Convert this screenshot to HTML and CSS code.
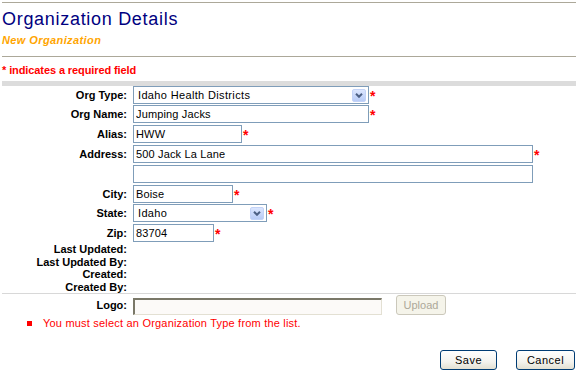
FILE: index.html
```html
<!DOCTYPE html>
<html>
<head>
<meta charset="utf-8">
<title>Organization Details</title>
<link rel="stylesheet" href="styles.css">
</head>
<body>
<div class="rule rule-top"></div>
<h1 class="title">Organization Details</h1>
<div class="subtitle">New Organization</div>
<div class="rule rule-mid"></div>
<div class="required-note">* indicates a required field</div>
<div class="bar"></div>

<div class="form">
  <div class="form-row tight">
    <label class="label">Org Type:</label>
    <div class="field select w-236">
      <span>Idaho Health Districts</span>
      <span class="drop"><svg width="8" height="5" viewBox="0 0 8 5"><polyline points="1,0.8 4,3.8 7,0.8" fill="none" stroke="#4d6185" stroke-width="2"/></svg></span>
    </div>
    <span class="req">*</span>
  </div>
  <div class="form-row">
    <label class="label">Org Name:</label>
    <input class="field w-236" type="text" value="Jumping Jacks">
    <span class="req">*</span>
  </div>
  <div class="form-row">
    <label class="label">Alias:</label>
    <input class="field w-109" type="text" value="HWW">
    <span class="req">*</span>
  </div>
  <div class="form-row">
    <label class="label">Address:</label>
    <input class="field w-400" type="text" value="500 Jack La Lane">
    <span class="req">*</span>
  </div>
  <div class="form-row">
    <span class="label"></span>
    <input class="field w-400" type="text" value="">
  </div>
  <div class="form-row tight">
    <label class="label">City:</label>
    <input class="field w-100" type="text" value="Boise">
    <span class="req">*</span>
  </div>
  <div class="form-row">
    <label class="label">State:</label>
    <div class="field select w-134">
      <span>Idaho</span>
      <span class="drop"><svg width="8" height="5" viewBox="0 0 8 5"><polyline points="1,0.8 4,3.8 7,0.8" fill="none" stroke="#4d6185" stroke-width="2"/></svg></span>
    </div>
    <span class="req">*</span>
  </div>
  <div class="form-row tight">
    <label class="label">Zip:</label>
    <input class="field w-81" type="text" value="83704">
    <span class="req">*</span>
  </div>
  <div class="info-row"><span class="label">Last Updated:</span></div>
  <div class="info-row"><span class="label">Last Updated By:</span></div>
  <div class="info-row"><span class="label">Created:</span></div>
  <div class="info-row"><span class="label">Created By:</span></div>
</div>

<div class="rule rule-light"></div>

<div class="logo-row">
  <label class="label">Logo:</label>
  <div class="file-input"></div>
  <button class="upload" disabled>Upload</button>
</div>

<div class="errors">
  <span class="bullet"></span>
  <span>You must select an Organization Type from the list.</span>
</div>

<div class="actions">
  <button class="btn btn-save">Save</button>
  <button class="btn btn-cancel">Cancel</button>
</div>
</body>
</html>
```

FILE: styles.css
```css
* { box-sizing: border-box; }

body {
  margin: 0;
  padding: 0 2px;
  font-family: "Liberation Sans", Arial, sans-serif;
  font-size: 11px;
  color: #000;
  background: #fff;
}

.rule { height: 1px; background: #aca899; }
.rule-top { margin-top: 2px; }
.rule-mid { margin-top: 9px; }
.rule-light { background: #d8d8d8; }

.title {
  margin: 6px 0 0 0;
  font-size: 18px;
  font-weight: normal;
  line-height: 21px;
  letter-spacing: 0.7px;
  color: #000080;
}

.subtitle {
  margin-top: 4px;
  font-weight: bold;
  font-style: italic;
  color: #ffa500;
  line-height: 13px;
  letter-spacing: 0.4px;
}

.required-note {
  margin-top: 7px;
  color: #f00;
  font-weight: bold;
  line-height: 13px;
  letter-spacing: -0.1px;
}

.bar { margin-top: 4px; height: 5px; background: #dcdcdc; }

.form-row {
  display: flex;
  align-items: center;
  height: 18px;
  margin-bottom: 2px;
}
.form-row.tight { margin-bottom: 1px; }

.label {
  flex: none;
  width: 125px;
  margin-right: 6px;
  text-align: right;
  font-weight: bold;
}

.field {
  flex: none;
  height: 18px;
  border: 1px solid #7f9db9;
  background: #fff;
  padding: 0 0 0 2px;
  font: inherit;
  letter-spacing: 0.15px;
  color: #000;
  outline: none;
}

.select {
  display: flex;
  align-items: center;
  justify-content: space-between;
  padding-left: 4px;
  letter-spacing: 0.35px;
}

.drop {
  width: 14px;
  height: 13px;
  margin-right: 2px;
  border: 1px solid #c3d3f7;
  border-radius: 2px;
  background: linear-gradient(#dbe6fe, #b8cbf6);
  display: flex;
  align-items: center;
  justify-content: center;
}

.w-236 { width: 236px; }
.w-109 { width: 109px; }
.w-400 { width: 400px; }
.w-100 { width: 100px; }
.w-134 { width: 134px; }
.w-81 { width: 81px; }

.req {
  align-self: flex-start;
  margin: 3px 0 0 1px;
  color: #f00;
  font-weight: bold;
  font-size: 14px;
  line-height: 14px;
}

.info-row {
  display: flex;
  height: 12.5px;
  line-height: 12.5px;
}

.logo-row {
  display: flex;
  align-items: center;
  height: 20px;
  margin-top: 1px;
}

.file-input {
  flex: none;
  width: 249px;
  height: 17px;
  margin-top: 2px;
  border-style: solid;
  border-width: 2px 1px 1px 2px;
  border-color: #7a7868 #e3e0d3 #e3e0d3 #7a7868;
  background: #fcfaf8;
}

.upload {
  flex: none;
  margin-left: 14px;
  width: 50px;
  height: 20px;
  border: 1px solid #cbc8bb;
  border-radius: 3px;
  background: #f5f4ea;
  color: #aca899;
  font: inherit;
  padding: 0;
}

.errors {
  display: flex;
  align-items: center;
  margin: 2px 0 0 25px;
  color: #f00;
  line-height: 13px;
  letter-spacing: 0.2px;
}

.bullet {
  flex: none;
  width: 5px;
  height: 5px;
  background: #f00;
  margin-right: 11px;
}

.actions {
  display: flex;
  justify-content: flex-end;
  gap: 19px;
  margin-top: 20px;
  padding-right: 1px;
}

.btn {
  height: 20px;
  padding: 0;
  border: 1px solid #003c74;
  border-radius: 3px;
  background: linear-gradient(#ffffff, #f4f3ee 60%, #e3e0d2);
  font: inherit;
  letter-spacing: 0.5px;
  color: #000;
}
.btn-save { width: 57px; }
.btn-cancel { width: 59px; }
```
